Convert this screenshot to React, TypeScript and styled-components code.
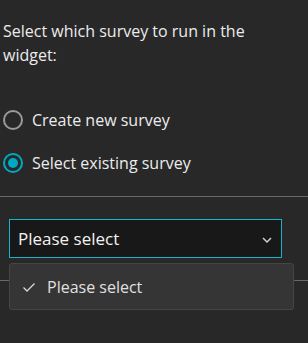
import { createGlobalStyle, styled } from 'styled-components'

const GlobalStyle = createGlobalStyle`
  html, body {
    margin: 0;
    padding: 0;
    background: #282828;
  }
  body {
    font-family: 'Open Sans', 'Noto Sans', sans-serif;
    color: #ececec;
  }
`

const Panel = styled.div`
  width: 308px;
  height: 343px;
  background: #282828;
  overflow: hidden;
`

const Intro = styled.p`
  margin: 0;
  padding: 19px 12px 0 3px;
  font-size: 16px;
  line-height: 24px;
  color: #ececec;
`

const RadioGroup = styled.div`
  display: flex;
  flex-direction: column;
  gap: 21px;
  padding: 42px 0 0 3px;
`

const RadioRow = styled.label`
  display: flex;
  align-items: center;
  gap: 9px;
  height: 22px;
  font-size: 16px;
  color: #ececec;
`

const RadioMark = styled.span<{ $checked?: boolean }>`
  box-sizing: border-box;
  width: 20px;
  height: 20px;
  border-radius: 50%;
  border: 2px solid ${(p) => (p.$checked ? '#00a9c2' : '#9a9a9a')};
  display: flex;
  align-items: center;
  justify-content: center;

  &::after {
    content: '';
    display: ${(p) => (p.$checked ? 'block' : 'none')};
    width: 10px;
    height: 10px;
    border-radius: 50%;
    background: #00a9c2;
  }
`

const Divider = styled.hr<{ $gap: number }>`
  margin: ${(p) => p.$gap}px 0 0 0;
  border: none;
  border-top: 1px solid #686868;
`

const SelectArea = styled.div`
  position: relative;
`

const SelectWrap = styled.div`
  padding: 22px 26px 0 9px;
`

const SelectBox = styled.div`
  box-sizing: border-box;
  height: 39px;
  display: flex;
  align-items: center;
  justify-content: space-between;
  padding: 0 8px 0 8px;
  background: #181818;
  border: 1px solid #14b5cc;
  font-size: 17px;
  color: #f2f2f2;
`

const Chevron = styled.svg`
  width: 12px;
  height: 12px;
  margin-top: 2px;
`

const Menu = styled.div`
  position: absolute;
  left: 9px;
  top: 66px;
  box-sizing: border-box;
  width: 285px;
  height: 47px;
  background: #353535;
  border: 1px solid #454545;
  border-radius: 3px;
  display: flex;
  align-items: center;
  gap: 10px;
  padding-left: 11px;
  font-size: 16px;
  color: #e0e0e0;
`

const Check = styled.svg`
  width: 16px;
  height: 16px;
`

export default function App() {
  return (
    <Panel>
      <GlobalStyle />
      <Intro>Select which survey to run in the widget:</Intro>
      <RadioGroup>
        <RadioRow>
          <RadioMark />
          Create new survey
        </RadioRow>
        <RadioRow>
          <RadioMark $checked />
          Select existing survey
        </RadioRow>
      </RadioGroup>
      <Divider $gap={22} />
      <SelectArea>
        <SelectWrap>
          <SelectBox>
            Please select
            <Chevron viewBox="0 0 12 12">
              <path d="M2 4l4 4 4-4" fill="none" stroke="#d0d0d0" strokeWidth="1.5" />
            </Chevron>
          </SelectBox>
        </SelectWrap>
        <Divider $gap={22} />
        <Menu>
          <Check viewBox="0 0 16 16">
            <path d="M2.5 8.5l3.5 3.5 7.5-7.5" fill="none" stroke="#d8d8d8" strokeWidth="1.3" />
          </Check>
          Please select
        </Menu>
      </SelectArea>
    </Panel>
  )
}
